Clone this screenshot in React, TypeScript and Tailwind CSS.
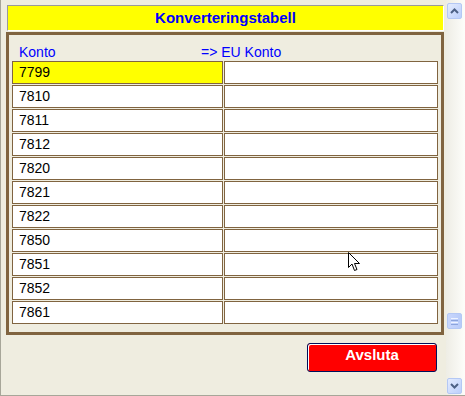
import React from "react";

const rows = ["7799", "7810", "7811", "7812", "7820", "7821", "7822", "7850", "7851", "7852", "7861"];

function ScrollBtn({ dir }: { dir: "up" | "down" }) {
  return (
    <div className="ml-[1px] w-[15px] h-[16px] rounded-[2px] border border-[#b4c8f4] bg-gradient-to-br from-[#e4ecfe] to-[#bccffb] flex items-center justify-center">
      <svg width="9" height="6" viewBox="0 0 9 6">
        {dir === "up" ? (
          <path d="M1 5 L4.5 1.5 L8 5" fill="none" stroke="#4d6185" strokeWidth="2" />
        ) : (
          <path d="M1 1 L4.5 4.5 L8 1" fill="none" stroke="#4d6185" strokeWidth="2" />
        )}
      </svg>
    </div>
  );
}

export default function App() {
  return (
    <div
      className="relative w-[465px] h-[396px] flex border-l border-b border-[#a7a699] bg-[#efede0]"
      style={{ fontFamily: '"Liberation Sans", Arial, sans-serif' }}
    >
      <div className="w-[445px] flex flex-col pl-[5px] pt-[5px]">
        <div className="ml-[1px] w-[437px] h-[26px] bg-[#ffff00] border-t border-l border-[#9a9a9a] border-r border-b border-r-white border-b-white flex items-center justify-center pb-[1px]">
          <span className="text-[15px] font-bold text-[#0000ff] leading-[17px]">Konverteringstabell</span>
        </div>
        <div className="mt-[1px] w-[438px] border-[3px] border-[#806440] px-[3px] pt-[9px] pb-[8px] flex flex-col">
          <div className="h-[17px] flex text-[14px] leading-[17px] text-[#0000ff]">
            <span className="w-[189px] pl-[7px]">Konto</span>
            <span>=&gt; EU Konto</span>
          </div>
          <div className="flex flex-col gap-[1px]">
            {rows.map((r, i) => (
              <div key={r} className="flex gap-[1px]">
                <div
                  className={`w-[211px] h-[23px] border border-[#806440] pl-[6px] text-[14px] leading-[21px] text-black ${
                    i === 0 ? "bg-[#ffff00]" : "bg-white"
                  }`}
                >
                  {r}
                </div>
                <div className="w-[214px] h-[23px] border border-[#806440] bg-white" />
              </div>
            ))}
          </div>
        </div>
        <div className="mt-[8px] ml-[301px] w-[130px] h-[29px] rounded-[3px] border border-[#00105a] bg-[#ff0000] shadow-[inset_1px_1px_0_#ffffff] flex justify-center pt-[2px]">
          <span className="text-[15px] font-bold text-white leading-[17px]">Avsluta</span>
        </div>
      </div>
      <div className="w-[19px] flex flex-col pt-[3px] pb-[1px] bg-gradient-to-r from-[#eeede5] to-[#fdfdfa]">
        <ScrollBtn dir="up" />
        <div className="flex-1 flex flex-col">
          <div className="mt-auto mb-[49px] ml-[1px] w-[15px] h-[16px] rounded-[2px] border border-[#b4c8f4] bg-gradient-to-r from-[#c8d6fc] to-[#b8cbf9] flex flex-col items-center justify-center gap-[1px]">
            <div className="w-[7px] h-[1px] bg-[#eef3ff]" />
            <div className="w-[7px] h-[1px] bg-[#8ca4dc]" />
            <div className="w-[7px] h-[1px] bg-[#eef3ff]" />
            <div className="w-[7px] h-[1px] bg-[#8ca4dc]" />
          </div>
        </div>
        <ScrollBtn dir="down" />
      </div>
      <svg className="absolute left-[347px] top-[252px]" width="13" height="21" viewBox="0 0 13 21">
        <path
          d="M0.5 0.5 L0.5 15.5 L4 12 L6.5 18.5 L9 17.5 L6.5 11.5 L11.5 11.5 Z"
          fill="white"
          stroke="black"
          strokeWidth="1"
        />
      </svg>
    </div>
  );
}
